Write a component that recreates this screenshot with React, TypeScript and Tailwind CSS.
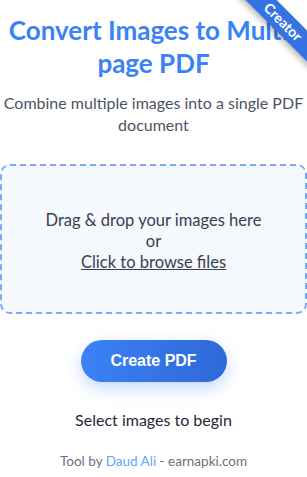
import React from "react";

export default function App() {
  return (
    <div className="relative min-h-[477px] w-full overflow-hidden bg-white font-['Lato',sans-serif] text-center">
      {/* corner ribbon */}
      <div className="absolute right-[-36px] top-[11px] w-[120px] rotate-45 bg-[#3573e3] py-[2px] text-[14px] font-bold leading-[18px] text-white shadow-[0_3px_6px_rgba(0,0,0,0.3)]">
        Creator
      </div>

      <h1 className="px-2 pt-[14px] text-[26px] font-bold leading-[33px] text-[#3b82f6]">
        Convert Images to Multi-page PDF
      </h1>
      <p className="mt-[12px] text-[16px] leading-[22px] text-[#4b5563]">
        Combine multiple images into a single PDF document
      </p>

      <div className="mt-[28px] flex h-[150px] flex-col items-center justify-center rounded-[10px] border-2 border-dashed border-[#7aa9f7] bg-[#f5f8fd] pt-[4px] text-[16.5px] leading-[21px] text-[#374151]">
        <p>Drag &amp; drop your images here</p>
        <p>or</p>
        <p className="underline">Click to browse files</p>
      </div>

      <div className="mt-[26px] flex justify-center">
        <button className="h-[42px] w-[146px] rounded-full bg-gradient-to-r from-[#3b82f6] to-[#2f68d8] font-['Liberation_Sans',Arial,sans-serif] text-[16px] font-bold text-white shadow-[0_6px_16px_rgba(59,130,246,0.3)]">
          Create PDF
        </button>
      </div>

      <p className="mt-[27px] text-[16px] leading-[22px] text-[#1f2937]">Select images to begin</p>

      <p className="mt-[21px] text-[13.5px] leading-[18px] text-[#6b7280]">
        Tool by <span className="text-[#60a5fa]">Daud Ali</span> - earnapki.com
      </p>
    </div>
  );
}
